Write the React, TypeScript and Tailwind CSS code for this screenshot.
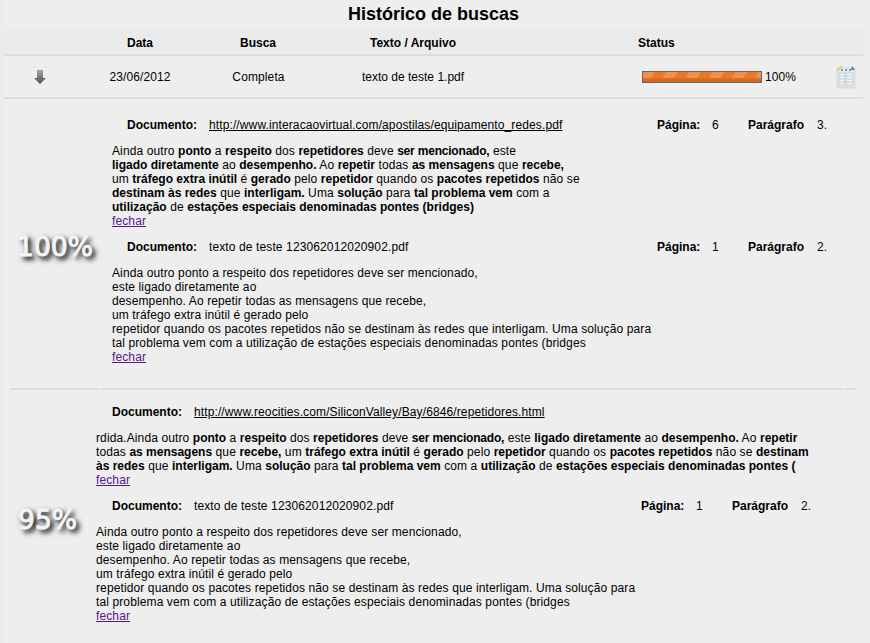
import React from 'react';

const B = ({ children }: { children: React.ReactNode }) => <b className="font-bold tracking-normal">{children}</b>;

// this phrase renders a little narrower than the rest of the bold text in the picture
const Mencionado = () => <b className="font-bold tracking-[-0.2px]">ser mencionado,</b>;

const Fechar = () => (
  <a href="#" className="text-[#551a8b] underline block">fechar</a>
);

const DocRow = ({ doc, link, pagina, paragrafo, wide }: { doc: string; link?: boolean; pagina?: string; paragrafo?: string; wide?: boolean }) => (
  <div className={`flex h-[14px] leading-[14px] ${wide ? 'pl-[15px]' : 'pl-[16px]'}`}>
    <b className="w-[82px] shrink-0 tracking-normal">Documento:</b>
    <span className={`shrink-0 ${wide ? 'w-[448px]' : 'w-[447px]'} ${link ? 'underline' : ''}`}>{doc}</span>
    {pagina && (
      <>
        <b className="w-[55px] shrink-0 tracking-normal">Página:</b>
        <span className="w-[36px] shrink-0">{pagina}</span>
        <b className="w-[69px] shrink-0 tracking-normal">Parágrafo</b>
        <span>{paragrafo}</span>
      </>
    )}
  </div>
);

const PlainText = () => (
  <p className="mt-[12px]">
    Ainda outro ponto a respeito dos repetidores deve ser mencionado,<br />
    este ligado diretamente ao<br />
    desempenho. Ao repetir todas as mensagens que recebe,<br />
    um tráfego extra inútil é gerado pelo<br />
    repetidor quando os pacotes repetidos não se destinam às redes que interligam. Uma solução para<br />
    tal problema vem com a utilização de estações especiais denominadas pontes (bridges
  </p>
);

const ProgressBar = () => (
  <div className="w-[120px] h-[12px] border border-[#666] bg-[repeating-linear-gradient(120deg,#e8925a_0px,#e8925a_10px,#e27a32_10px,#e27a32_20px)] relative">
    <div className="absolute left-0 right-0 bottom-0 h-[4px] bg-gradient-to-b from-[#e26f1e] to-[#de6005]" />
  </div>
);

const ReportIcon = () => (
  <svg width="22" height="24" viewBox="0 0 22 24" className="blur-[0.4px]">
    <rect x="2" y="3" width="18" height="19" fill="#e4eaed" stroke="#d4dadd" />
    <path d="M6 5h2M10 5h2M14 5h2" stroke="#6f9cc4" strokeWidth="2" />
    <path d="M4 8h6v12H4zM11 8h7v12h-7z" fill="#f0f3f5" stroke="#c4ced3" />
    <path d="M4 11h6M4 14h6M4 17h6M11 11h7M11 14h7M11 17h7" stroke="#c4ced3" />
    <path d="M2 6l5-5" stroke="#e8c48c" strokeWidth="2" />
    <path d="M17 1l3 4h-4z" fill="#777" />
    <rect x="1" y="22" width="20" height="1.5" fill="#dadada" />
  </svg>
);

const Separator = () => (
  <div className="flex gap-[2px] ml-[7px] w-[846px] h-[2px]">
    <div className="w-[88px] bg-[#dddddd]" />
    <div className="w-[744px] bg-[#dddddd]" />
    <div className="w-[10px] bg-[#dddddd]" />
  </div>
);

export default function App() {
  return (
    <div className="w-[870px] h-[643px] overflow-hidden bg-[#ececec] font-['Liberation_Sans',Arial,sans-serif] text-[12px] leading-[14px] tracking-[0.115px] text-black">
      <div className="mx-[3px] w-[860px] h-full bg-[#eeeeee]">
        <h1 className="h-[28px] pt-[3px] text-center text-[18px] leading-[22px] font-bold tracking-normal text-black pl-[1px]">Histórico de buscas</h1>

        <div className="flex h-[28px] pt-[8px] font-bold tracking-normal border-b-2 border-[#dddddd] bg-[#ebebeb]">
          <div className="w-[124px]" />
          <div className="w-[113px]">Data</div>
          <div className="w-[130px]">Busca</div>
          <div className="w-[268px]">Texto / Arquivo</div>
          <div>Status</div>
        </div>

        <div className="flex h-[43px] items-center border-b-2 border-[#dddddd]">
          <div className="w-[74px] flex justify-center pt-[2px]">
            <svg width="12" height="15" viewBox="0 0 12 15">
              <defs>
                <linearGradient id="arrow" x1="0" y1="0" x2="0" y2="1">
                  <stop offset="0" stopColor="#a8a8a8" />
                  <stop offset="1" stopColor="#4a4a4a" />
                </linearGradient>
              </defs>
              <path d="M3 0h6v8h3l-6 6-6-6h3z" fill="url(#arrow)" />
            </svg>
          </div>
          <div className="w-[126px] text-center">23/06/2012</div>
          <div className="w-[111px] text-center">Completa</div>
          <div className="w-[281px] pl-[48px] tracking-normal">texto de teste 1.pdf</div>
          <div className="w-[47px]" />
          <ProgressBar />
          <span className="ml-[3px] w-[70px]">100%</span>
          <ReportIcon />
        </div>

        <div className="flex h-[289px] pt-[19px] pb-[8px]">
          <div className="w-[104px] shrink-0 flex items-center justify-center pb-[4px] font-['DejaVu_Sans',sans-serif] text-[26.5px] tracking-normal text-[#f4f4f4] [-webkit-text-stroke:1px_#f4f4f4] [text-shadow:3px_3px_4px_#111,3px_3px_6px_#333]">100%</div>
          <div className="pl-[5px]">
            <DocRow wide doc="http://www.interacaovirtual.com/apostilas/equipamento_redes.pdf" link pagina="6" paragrafo="3." />
            <p className="mt-[12px]">
              Ainda outro <B>ponto</B> a <B>respeito</B> dos <B>repetidores</B> deve <Mencionado /> este<br />
              <B>ligado diretamente</B> ao <B>desempenho.</B> Ao <B>repetir</B> todas <B>as mensagens</B> que <B>recebe,</B><br />
              um <B>tráfego extra inútil</B> é <B>gerado</B> pelo <B>repetidor</B> quando os <B>pacotes repetidos</B> não se<br />
              <B>destinam às redes</B> que <B>interligam.</B> Uma <B>solução</B> para <B>tal problema vem</B> com a<br />
              <B>utilização</B> de <B>estações especiais denominadas pontes (bridges)</B>
            </p>
            <Fechar />
            <div className="mt-[12px]">
              <DocRow wide doc="texto de teste 123062012020902.pdf" pagina="1" paragrafo="2." />
            </div>
            <PlainText />
            <Fechar />
          </div>
        </div>

        <Separator />

        <div className="flex pt-[15px]">
          <div className="w-[89px] shrink-0 flex items-center justify-center pt-[12px] font-['DejaVu_Sans',sans-serif] text-[26.5px] tracking-normal text-[#f4f4f4] [-webkit-text-stroke:1px_#f4f4f4] [text-shadow:3px_3px_4px_#111,3px_3px_6px_#333]">95%</div>
          <div className="pl-[4px]">
            <DocRow doc="http://www.reocities.com/SiliconValley/Bay/6846/repetidores.html" link />
            <p className="mt-[12px] whitespace-nowrap">
              rdida.Ainda outro <B>ponto</B> a <B>respeito</B> dos <B>repetidores</B> deve <Mencionado /> este <B>ligado diretamente</B> ao <B>desempenho.</B> Ao <B>repetir</B><br />
              todas <B>as mensagens</B> que <B>recebe,</B> um <B>tráfego extra inútil</B> é <B>gerado</B> pelo <B>repetidor</B> quando os <B>pacotes repetidos</B> não se <B>destinam</B><br />
              <B>às redes</B> que <B>interligam.</B> Uma <B>solução</B> para <B>tal problema vem</B> com a <B>utilização</B> de <B>estações especiais denominadas pontes (</B>
            </p>
            <Fechar />
            <div className="mt-[12px]">
              <DocRow doc="texto de teste 123062012020902.pdf" pagina="1" paragrafo="2." />
            </div>
            <PlainText />
            <Fechar />
          </div>
        </div>
      </div>
    </div>
  );
}
